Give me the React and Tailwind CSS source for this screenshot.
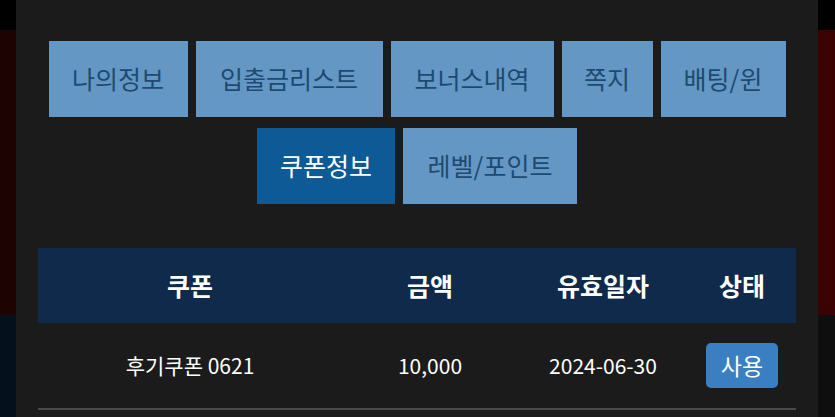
const font = { fontFamily: '"Noto Sans CJK KR", "Noto Sans", sans-serif' };

const tabsTop = [
  { label: "나의정보", w: "w-[139px]" },
  { label: "입출금리스트", w: "w-[187px]" },
  { label: "보너스내역", w: "w-[163px]" },
  { label: "쪽지", w: "w-[91px]" },
  { label: "배팅/윈", w: "w-[125px]" },
];

const tabsBottom = [
  { label: "쿠폰정보", w: "w-[138px]", active: true },
  { label: "레벨/포인트", w: "w-[174px]" },
];

function Tab({ label, w, active }) {
  return (
    <button
      className={
        "h-[76px] flex items-center justify-center text-[25px] " + w + " " +
        (active ? "bg-[#0e5a96] text-white" : "bg-[#6497c4] text-[#1d4a72]")
      }
    >
      {label}
    </button>
  );
}

export default function App() {
  return (
    <div className="w-[835px] h-[417px] overflow-hidden flex bg-black" style={font}>
      <div className="w-[16px] flex flex-col">
        <div className="h-[30px] bg-black" />
        <div className="h-[285px] bg-[#1e0303]" />
        <div className="flex-1 bg-[#04101c]" />
      </div>

      <div className="w-[802px] bg-[#1b1b1b] flex flex-col">
        <div className="pt-[41px] flex flex-col items-center gap-[11px]">
          <div className="flex gap-[8px]">
            {tabsTop.map((t) => <Tab key={t.label} {...t} />)}
          </div>
          <div className="flex gap-[8px]">
            {tabsBottom.map((t) => <Tab key={t.label} {...t} />)}
          </div>
        </div>

        <div className="mt-[44px] mx-[22px]">
          <div className="grid grid-cols-[304px_176px_170px_108px] h-[75px] items-center bg-[#0f2a4a] text-white font-bold text-[25px]">
            <div className="text-center">쿠폰</div>
            <div className="text-center">금액</div>
            <div className="text-center">유효일자</div>
            <div className="text-center">상태</div>
          </div>
          <div className="grid grid-cols-[304px_176px_170px_108px] h-[87px] items-center text-white text-[21px] border-b-2 border-[#4a4a4a]">
            <div className="text-center">후기쿠폰 0621</div>
            <div className="text-center">10,000</div>
            <div className="text-center">2024-06-30</div>
            <div className="flex justify-center">
              <button className="w-[72px] h-[45px] rounded-[5px] bg-[#3a7fc1] text-white text-[23px] flex items-center justify-center">사용</button>
            </div>
          </div>
        </div>
      </div>

      <div className="flex-1 flex flex-col">
        <div className="h-[30px] bg-black" />
        <div className="h-[285px] bg-[#3a0202]" />
        <div className="flex-1 bg-[#0e0e0e]" />
      </div>
    </div>
  );
}
